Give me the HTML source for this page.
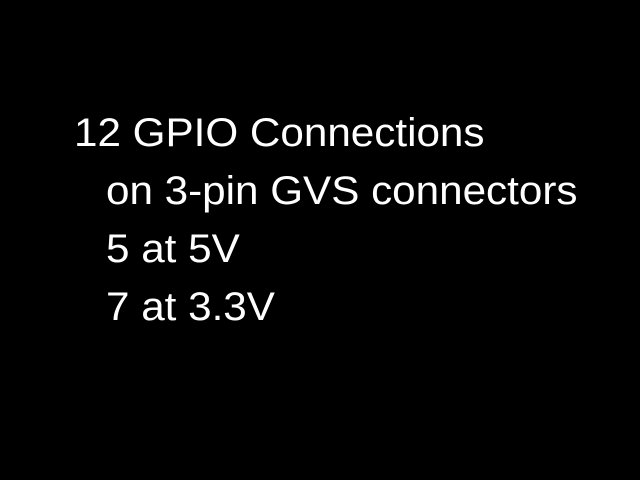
<!DOCTYPE html>
<html><head><meta charset="utf-8"><style>
html,body{margin:0;padding:0;background:#000;width:640px;height:480px;overflow:hidden}
.l{position:absolute;color:#fff;font-family:"Liberation Sans",Arial,sans-serif;font-size:40px;line-height:40px;white-space:nowrap;transform-origin:0 0;transform:scaleX(1.055)}
</style></head><body>
<div class="l" style="left:74px;top:113px">12 GPIO Connections</div>
<div class="l" style="left:106px;top:171px">on 3-pin GVS connectors</div>
<div class="l" style="left:106px;top:229px">5 at 5V</div>
<div class="l" style="left:106px;top:287px">7 at 3.3V</div>
</body></html>
